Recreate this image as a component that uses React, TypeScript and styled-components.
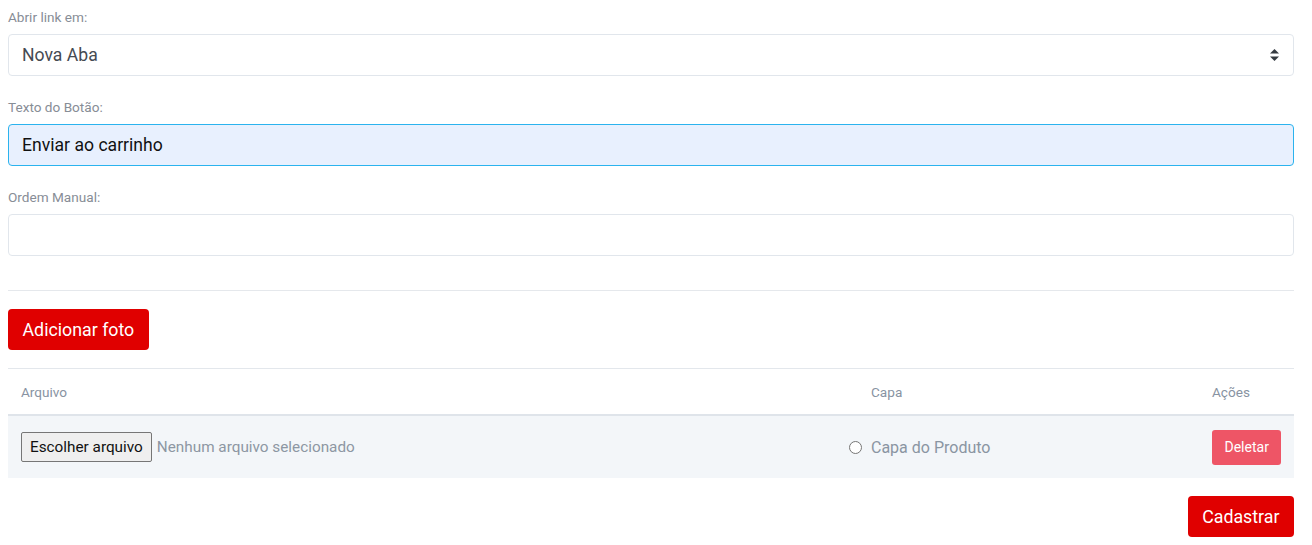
import styled, { createGlobalStyle } from "styled-components";

const GlobalStyle = createGlobalStyle`
  body {
    margin: 0;
    background: #ffffff;
    font-family: Roboto, "Liberation Sans", Arial, sans-serif;
  }
`;

const SelectArrows = () => (
  <svg width="9" height="12" viewBox="0 0 9 12">
    <path d="M4.5 0 L9 4.6 L0 4.6 Z" fill="#343a40" />
    <path d="M4.5 12 L9 7.4 L0 7.4 Z" fill="#343a40" />
  </svg>
);

const columns = ["Arquivo", "Capa", "Ações"];

const App = () => {
  return (
    <Page>
      <GlobalStyle />
      <FormGroup>
        <Label>Abrir link em:</Label>
        <Field>
          <span>Nova Aba</span>
          <SelectArrows />
        </Field>
      </FormGroup>

      <FormGroup>
        <Label>Texto do Botão:</Label>
        <Field $autofill>
          <span>Enviar ao carrinho</span>
        </Field>
      </FormGroup>

      <FormGroup>
        <Label>Ordem Manual:</Label>
        <Field />
      </FormGroup>

      <Divider />

      <RedButton>Adicionar foto</RedButton>

      <Table>
        <HeadRow>
          {columns.map((c) => (
            <HeadCell key={c}>{c}</HeadCell>
          ))}
        </HeadRow>
        <BodyRow>
          <Cell>
            <FileButton>Escolher arquivo</FileButton>
            <FileName>Nenhum arquivo selecionado</FileName>
          </Cell>
          <Cell>
            <Radio />
            <RadioText>Capa do Produto</RadioText>
          </Cell>
          <Cell>
            <DeleteButton>Deletar</DeleteButton>
          </Cell>
        </BodyRow>
      </Table>

      <Footer>
        <RedButton>Cadastrar</RedButton>
      </Footer>
    </Page>
  );
};

export default App;

const Page = styled.div`
  width: 1286px;
  padding: 8px 0 0 8px;
`;

const FormGroup = styled.div`
  margin-bottom: 22px;
`;

const Label = styled.div`
  font-size: 13.6px;
  line-height: 18px;
  color: #878d96;
  margin-bottom: 8px;
`;

const Field = styled.div<{ $autofill?: boolean }>`
  box-sizing: border-box;
  height: 42px;
  display: flex;
  align-items: center;
  justify-content: space-between;
  padding: 0 14px 0 13px;
  border: 1px solid ${({ $autofill }) => ($autofill ? "#2bb3ee" : "#e1e6ec")};
  border-radius: 4px;
  background: ${({ $autofill }) => ($autofill ? "#e8f0fe" : "#ffffff")};
  color: ${({ $autofill }) => ($autofill ? "#111111" : "#454a52")};
  font-size: 17.6px;
`;

const Divider = styled.hr`
  margin: 34px 0 0;
  border: 0;
  border-top: 1px solid #e5e8ec;
`;

const RedButton = styled.button`
  box-sizing: border-box;
  height: 41px;
  margin-top: 18px;
  padding: 0 14.5px;
  border: 0;
  border-radius: 4px;
  background: #e00000;
  color: #ffffff;
  font-family: inherit;
  font-size: 17.8px;
`;

const Table = styled.div`
  margin-top: 18px;
  border-top: 1px solid #e3e7ec;
`;

const Row = styled.div`
  display: grid;
  grid-template-columns: 1fr 341px 95px;
  align-items: center;
`;

const HeadRow = styled(Row)`
  height: 45px;
  border-bottom: 2px solid #dfe4ea;
`;

const BodyRow = styled(Row)`
  height: 62px;
  background: #f3f6f9;
`;

const HeadCell = styled.div`
  padding: 0 13px;
  font-size: 13.6px;
  color: #8893a2;
`;

const Cell = styled.div`
  display: flex;
  align-items: center;
  padding: 0 13px;
`;

const FileButton = styled.span`
  box-sizing: border-box;
  height: 30px;
  display: inline-flex;
  align-items: center;
  padding: 0 8px;
  border: 1px solid #767676;
  border-radius: 2px;
  background: #efefef;
  color: #111111;
  font-size: 15.3px;
`;

const FileName = styled.span`
  margin-left: 5px;
  font-size: 15.3px;
  color: #8d97a3;
`;

const Radio = styled.span`
  box-sizing: border-box;
  width: 13px;
  height: 13px;
  margin: 0 9px 0 -22px;
  border: 1px solid #767676;
  border-radius: 50%;
  background: #ffffff;
`;

const RadioText = styled.span`
  font-size: 16px;
  color: #8a95a2;
`;

const DeleteButton = styled.span`
  box-sizing: border-box;
  height: 35px;
  display: inline-flex;
  align-items: center;
  padding: 0 12.5px;
  border-radius: 3px;
  background: #ee5566;
  color: #ffffff;
  font-size: 14px;
`;

const Footer = styled.div`
  display: flex;
  justify-content: flex-end;
`;
